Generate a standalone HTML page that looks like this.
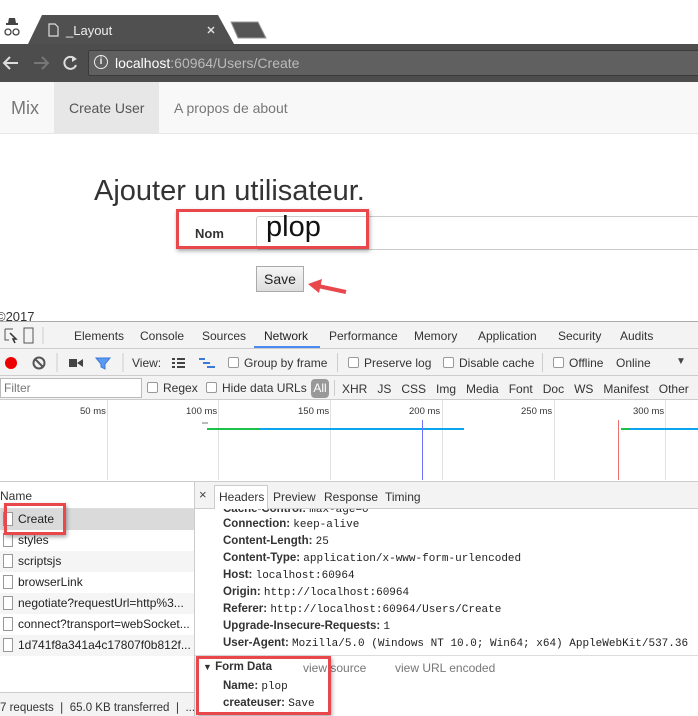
<!DOCTYPE html>
<html><head><style>
*{margin:0;padding:0;box-sizing:border-box}
body{width:698px;height:716px;overflow:hidden;background:#fff;font-family:"Liberation Sans",sans-serif;position:relative}
.a{position:absolute;white-space:nowrap}
.dt{font-size:12px;color:#333}
.cb{display:inline-block;width:11px;height:11px;border:1px solid #999;border-radius:2px;background:#fff;vertical-align:-1px;margin-right:5px}
.mono{font-family:"Liberation Mono",monospace;font-size:11px;font-weight:normal;color:#222}
.hd{font-size:11.5px;font-weight:bold;color:#333}
.red{border:3px solid #e8474b;box-shadow:1px 2px 4px rgba(0,0,0,.35)}
.vl{position:absolute;top:400px;height:80px;width:1px;background:#e0e0e0}
.ms{position:absolute;top:406px;font-size:9.5px;color:#333}
.row{position:absolute;left:0;width:194px;height:21px;font-size:12px;color:#222}
.row span{position:absolute;left:18px;top:3px}
.ic{position:absolute;left:3px;top:3px;width:10px;height:14px;border:1px solid #999;background:#fff}
</style></head><body>
<svg class="a" style="left:0;top:0" width="698" height="44">
<path d="M28 44 L42 15 L218 15 L234 44 Z" fill="#505050"/>
<path d="M231 22 L258 22 L266 38 L238 38 Z" fill="#555" stroke="#999" stroke-width="1"/>
<g fill="#444"><rect x="6" y="23" width="12" height="2"/><path d="M8 23 L9 18 L15 18 L16 23Z"/></g>
<circle cx="8" cy="32" r="3" fill="none" stroke="#444" stroke-width="1.3"/><circle cx="16" cy="32" r="3" fill="none" stroke="#444" stroke-width="1.3"/>
<path d="M49 24 h6 l3 3 v9 h-9 z" fill="none" stroke="#ddd" stroke-width="1.2"/>
<path d="M208 27 l6 6 M214 27 l-6 6" stroke="#ddd" stroke-width="1.5"/>
</svg>
<div class="a" style="left:66px;top:23px;font-size:13px;color:#eee">_Layout</div>
<div class="a" style="left:0;top:44px;width:698px;height:38px;background:#4d4d4d"></div>
<svg class="a" style="left:0;top:44px" width="90" height="38">
<path d="M18 19 H4 M10 13 L4 19 L10 25" stroke="#ddd" stroke-width="2" fill="none"/>
<path d="M34 19 H48 M42 13 L48 19 L42 25" stroke="#777" stroke-width="2" fill="none"/>
<path d="M75 15 A6 6 0 1 0 76 21" stroke="#ddd" stroke-width="2" fill="none"/><path d="M72 12 L77 15 L72 18Z" fill="#ddd"/>
</svg>
<div class="a" style="left:88px;top:50px;width:620px;height:26px;background:#606060;border-radius:2px;border:1px solid #3a3a3a"></div>
<div class="a" style="left:94px;top:55px;width:14px;height:14px;border:1.5px solid #eee;border-radius:50%;color:#eee;font-size:10px;font-weight:bold;text-align:center;line-height:12px">i</div>
<div class="a" style="left:115px;top:55px;font-size:14px;color:#bbb"><span style="color:#fff">localhost</span>:60964/Users/Create</div>
<div class="a" style="left:0;top:82px;width:698px;height:52px;background:#f8f8f8;border-bottom:1px solid #e7e7e7"></div>
<div class="a" style="left:54px;top:82px;width:105px;height:51px;background:#e7e7e7"></div>
<div class="a" style="left:11px;top:98px;font-size:18px;color:#777">Mix</div>
<div class="a" style="left:69px;top:100px;font-size:14px;color:#555">Create User</div>
<div class="a" style="left:174px;top:100px;font-size:14px;color:#777">A propos de about</div>
<div class="a" style="left:94px;top:175px;font-size:29px;color:#333">Ajouter un utilisateur.</div>
<div class="a" style="left:256px;top:216px;width:450px;height:34px;border:1px solid #ccc;border-radius:3px"></div>
<div class="a red" style="left:176px;top:209px;width:193px;height:40px"></div>
<div class="a" style="left:195px;top:226px;font-size:13px;font-weight:bold;color:#333">Nom</div>
<div class="a" style="left:266px;top:211px;font-size:29px;color:#111">plop</div>
<div class="a" style="left:256px;top:266px;width:48px;height:26px;border:1px solid #aaa;background:linear-gradient(#f6f6f6,#ddd);font-size:14px;color:#222;text-align:center;line-height:24px">Save</div>
<svg class="a" style="left:304px;top:278px" width="48" height="22"><path d="M42 14 L14 8" stroke="#e8474b" stroke-width="4"/><path d="M4 6 L18 1 L15 15Z" fill="#e8474b"/></svg>
<div class="a" style="left:-4px;top:309px;font-size:13px;color:#333">©2017</div>
<div class="a" style="left:0;top:321px;width:698px;height:395px;background:#fff;border-top:1px solid #aaa"></div>
<div class="a" style="left:0;top:322px;width:698px;height:27px;background:#f3f3f3;border-bottom:1px solid #ccc"></div>
<svg class="a" style="left:0;top:322px" width="60" height="27"><path d="M5 7 h8 M5 7 v11 h4" stroke="#555" fill="none"/><path d="M10 11 L16 17 L13 17 L15 21" stroke="#333" fill="none" stroke-width="1.5"/><rect x="24" y="6" width="9" height="15" fill="none" stroke="#555"/><line x1="43" y1="5" x2="43" y2="22" stroke="#ccc"/></svg>
<div class="a dt" style="left:74px;top:329px">Elements</div>
<div class="a dt" style="left:140px;top:329px">Console</div>
<div class="a dt" style="left:202px;top:329px">Sources</div>
<div class="a dt" style="left:264px;top:329px;color:#222">Network</div>
<div class="a" style="left:254px;top:346px;width:66px;height:2px;background:#4a8af4"></div>
<div class="a dt" style="left:329px;top:329px">Performance</div>
<div class="a dt" style="left:414px;top:329px">Memory</div>
<div class="a dt" style="left:478px;top:329px">Application</div>
<div class="a dt" style="left:558px;top:329px">Security</div>
<div class="a dt" style="left:620px;top:329px">Audits</div>
<div class="a" style="left:0;top:349px;width:698px;height:27px;background:#f3f3f3;border-bottom:1px solid #ccc"></div>
<svg class="a" style="left:0;top:349px" width="230" height="27">
<circle cx="11" cy="14" r="6" fill="#e00"/>
<circle cx="39" cy="14" r="5.5" fill="none" stroke="#555" stroke-width="2"/><line x1="35" y1="10" x2="43" y2="18" stroke="#555" stroke-width="2"/>
<line x1="57" y1="4" x2="57" y2="23" stroke="#ccc"/>
<rect x="69" y="10" width="8" height="8" fill="#444"/><path d="M77 14 L83 10 V18Z" fill="#444"/>
<path d="M96 9 H110 L105 15 V20 L101 18 V15Z" fill="#5a9af0" stroke="#3b7ad8"/>
<line x1="123" y1="4" x2="123" y2="23" stroke="#ccc"/>
<g fill="#444"><rect x="172" y="9" width="3" height="2"/><rect x="177" y="9" width="8" height="2"/><rect x="172" y="13" width="3" height="2"/><rect x="177" y="13" width="8" height="2"/><rect x="172" y="17" width="3" height="2"/><rect x="177" y="17" width="8" height="2"/></g>
<g fill="#3b7ad8"><rect x="199" y="9" width="6" height="2"/><rect x="203" y="13" width="7" height="2"/><rect x="207" y="17" width="8" height="2"/></g>
</svg>
<div class="a dt" style="left:132px;top:356px">View:</div>
<div class="a dt" style="left:228px;top:356px"><span class="cb"></span>Group by frame</div>
<div class="a" style="left:337px;top:353px;width:1px;height:19px;background:#ccc"></div>
<div class="a dt" style="left:348px;top:356px"><span class="cb"></span>Preserve log</div>
<div class="a dt" style="left:443px;top:356px"><span class="cb"></span>Disable cache</div>
<div class="a" style="left:542px;top:353px;width:1px;height:19px;background:#ccc"></div>
<div class="a dt" style="left:553px;top:356px"><span class="cb"></span>Offline</div>
<div class="a dt" style="left:616px;top:356px">Online</div>
<div class="a" style="left:676px;top:356px;font-size:10px;color:#444">▼</div>
<div class="a" style="left:0;top:376px;width:698px;height:24px;background:#f3f3f3;border-bottom:1px solid #ccc"></div>
<div class="a" style="left:0;top:378px;width:142px;height:20px;background:#fff;border:1px solid #bbb;font-size:12px;color:#777;padding:2px 3px">Filter</div>
<div class="a dt" style="left:147px;top:381px"><span class="cb"></span>Regex</div>
<div class="a dt" style="left:206px;top:381px"><span class="cb"></span>Hide data URLs</div>
<div class="a" style="left:311px;top:379px;width:18px;height:19px;background:#999;border-radius:4px;color:#fff;font-size:12px;text-align:center;line-height:19px">All</div>
<div class="a" style="left:334px;top:380px;width:1px;height:16px;background:#ccc"></div>
<div class="a dt" style="left:342px;top:382px">XHR&nbsp;&nbsp;&nbsp;JS&nbsp;&nbsp;&nbsp;CSS&nbsp;&nbsp;&nbsp;Img&nbsp;&nbsp;&nbsp;Media&nbsp;&nbsp;&nbsp;Font&nbsp;&nbsp;&nbsp;Doc&nbsp;&nbsp;&nbsp;WS&nbsp;&nbsp;&nbsp;Manifest&nbsp;&nbsp;&nbsp;Other</div>
<div class="vl" style="left:107px"></div><div class="vl" style="left:218px"></div><div class="vl" style="left:330px"></div><div class="vl" style="left:442px"></div><div class="vl" style="left:554px"></div><div class="vl" style="left:665px"></div>
<div class="ms" style="left:80px">50 ms</div><div class="ms" style="left:186px">100 ms</div><div class="ms" style="left:298px">150 ms</div><div class="ms" style="left:409px">200 ms</div><div class="ms" style="left:521px">250 ms</div><div class="ms" style="left:633px">300 ms</div>
<div class="a" style="left:202px;top:422px;width:6px;height:2px;background:#bbb"></div>
<div class="a" style="left:207px;top:428px;width:52px;height:2px;background:#1ec04a"></div>
<div class="a" style="left:259px;top:428px;width:205px;height:2px;background:#0aa5f0"></div>
<div class="a" style="left:422px;top:420px;width:1px;height:60px;background:#7070ff"></div>
<div class="a" style="left:618px;top:420px;width:1px;height:60px;background:#f07070"></div>
<div class="a" style="left:621px;top:428px;width:8px;height:2px;background:#1ec04a"></div>
<div class="a" style="left:629px;top:428px;width:69px;height:2px;background:#0aa5f0"></div>
<div class="a" style="left:0;top:481px;width:698px;height:1px;background:#ccc"></div>
<div class="a" style="left:194px;top:481px;width:1px;height:235px;background:#ccc"></div>
<div class="a" style="left:0;top:508px;width:194px;height:1px;background:#ddd"></div>
<div class="a" style="left:0;top:489px;font-size:12px;color:#333">Name</div>
<div class="row" style="top:509px;background:#dadada"><div class="ic"></div><span>Create</span></div>
<div class="row" style="top:530px"><div class="ic"></div><span>styles</span></div>
<div class="row" style="top:551px;background:#f5f5f5"><div class="ic"></div><span>scriptsjs</span></div>
<div class="row" style="top:572px"><div class="ic"></div><span>browserLink</span></div>
<div class="row" style="top:593px;background:#f5f5f5"><div class="ic"></div><span>negotiate?requestUrl=http%3...</span></div>
<div class="row" style="top:614px"><div class="ic"></div><span>connect?transport=webSocket...</span></div>
<div class="row" style="top:635px;background:#f5f5f5"><div class="ic"></div><span>1d741f8a341a4c17807f0b812f...</span></div>
<div class="a red" style="left:4px;top:503px;width:62px;height:32px"></div>
<div class="a" style="left:0;top:692px;width:194px;height:24px;background:#f3f3f3;border-top:1px solid #ccc"></div>
<div class="a" style="left:0;top:700px;font-size:11.5px;color:#333">7 requests ❘ 65.0 KB transferred ❘ ...</div>
<div class="a" style="left:195px;top:482px;width:503px;height:27px;background:#f3f3f3;border-bottom:1px solid #ccc"></div>
<div class="a" style="left:199px;top:487px;font-size:13px;color:#444">×</div>
<div class="a" style="left:214px;top:485px;width:54px;height:24px;background:#fff;border:1px solid #ccc;border-bottom:none"></div>
<div class="a dt" style="left:219px;top:490px">Headers</div>
<div class="a dt" style="left:273px;top:490px">Preview</div>
<div class="a dt" style="left:324px;top:490px">Response</div>
<div class="a dt" style="left:385px;top:490px">Timing</div>
<div class="a" style="left:196px;top:509px;width:500px;height:8px;overflow:hidden"><div class="a hd" style="left:27px;top:-6px">Cache-Control: <span class="mono">max-age=0</span></div></div>
<div class="a hd" style="left:223px;top:518px">Connection: <span class="mono">keep-alive</span></div>
<div class="a hd" style="left:223px;top:535px">Content-Length: <span class="mono">25</span></div>
<div class="a hd" style="left:223px;top:552px">Content-Type: <span class="mono">application/x-www-form-urlencoded</span></div>
<div class="a hd" style="left:223px;top:569px">Host: <span class="mono">localhost:60964</span></div>
<div class="a hd" style="left:223px;top:586px">Origin: <span class="mono">http://localhost:60964</span></div>
<div class="a hd" style="left:223px;top:603px">Referer: <span class="mono">http://localhost:60964/Users/Create</span></div>
<div class="a hd" style="left:223px;top:620px">Upgrade-Insecure-Requests: <span class="mono">1</span></div>
<div class="a hd" style="left:223px;top:637px">User-Agent: <span class="mono">Mozilla/5.0 (Windows NT 10.0; Win64; x64) AppleWebKit/537.36</span></div>
<div class="a" style="left:195px;top:655px;width:503px;height:1px;background:#ddd"></div>
<div class="a hd" style="left:203px;top:661px"><span style="font-size:9px">▼</span> Form Data</div>
<div class="a dt" style="left:303px;top:661px;color:#777">view source</div>
<div class="a dt" style="left:395px;top:661px;color:#777">view URL encoded</div>
<div class="a hd" style="left:223px;top:680px">Name: <span class="mono">plop</span></div>
<div class="a hd" style="left:223px;top:697px">createuser: <span class="mono">Save</span></div>
<div class="a red" style="left:196px;top:656px;width:135px;height:59px"></div>
</body></html>
